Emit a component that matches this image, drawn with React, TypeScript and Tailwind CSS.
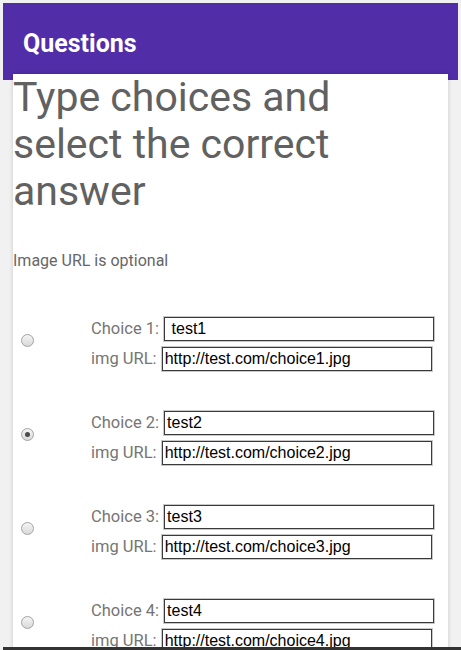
const choices = [
  { n: 1, text: ' test1', url: 'http://test.com/choice1.jpg', checked: false },
  { n: 2, text: 'test2', url: 'http://test.com/choice2.jpg', checked: true },
  { n: 3, text: 'test3', url: 'http://test.com/choice3.jpg', checked: false },
  { n: 4, text: 'test4', url: 'http://test.com/choice4.jpg', checked: false },
]

function Radio({ checked }: { checked: boolean }) {
  return (
    <span className="-mt-2 flex h-[13px] w-[13px] items-center justify-center rounded-full border border-[#a3a3a3] bg-gradient-to-b from-[#f4f4f4] to-[#d9d9d9]">
      {checked && <span className="h-[5px] w-[5px] rounded-full bg-[#4a4a4a]" />}
    </span>
  )
}

function Field({ label, value }: { label: string; value: string }) {
  return (
    <div className="flex h-[24px] items-center">
      <span className="mr-[1px] whitespace-pre text-[16.5px] text-[#757575]">{label} </span>
      <input
        readOnly
        value={value}
        className="h-[24px] w-[270px] border border-[#3a3a3a] px-[2px] text-[16px] text-black shadow-[0_0_0_1px_#c8c8c8] outline-none"
        style={{ fontFamily: '"Liberation Sans", Arial, sans-serif' }}
      />
    </div>
  )
}

export default function App() {
  return (
    <div
      className="min-h-[650px] bg-[#f1f1f1] pl-[3px] pr-[3px] pt-[3px]"
      style={{ fontFamily: 'Roboto, "Noto Sans", sans-serif' }}
    >
      {/* Header */}
      <header className="flex h-[77px] items-center bg-[#512da8] pl-5 pt-[5px]">
        <h1 className="text-[25px] font-bold text-white">Questions</h1>
      </header>

      {/* Card */}
      <main className="mx-[10px] bg-white pb-10 shadow-[0_0_4px_rgba(0,0,0,0.18)]">
        <h2 className="-mt-[6px] max-w-[345px] text-[41px] leading-[47px] text-[#616161]">
          Type choices and select the correct answer
        </h2>
        <p className="mt-[34px] text-[16px] leading-[24px] text-[#666]">Image URL is optional</p>

        <ul className="mt-[44px] flex flex-col gap-[40px]">
          {choices.map((c) => (
            <li key={c.n} className="flex items-center">
              <div className="flex w-[78px] items-center pl-2">
                <Radio checked={c.checked} />
              </div>
              <div className="flex flex-col gap-[6px]">
                <Field label={`Choice ${c.n}:`} value={c.text} />
                <Field label="img URL:" value={c.url} />
              </div>
            </li>
          ))}
        </ul>
      </main>

      {/* Bottom bar */}
      <div className="fixed bottom-0 left-[3px] right-0 h-[3px] bg-[#333]" />
    </div>
  )
}
